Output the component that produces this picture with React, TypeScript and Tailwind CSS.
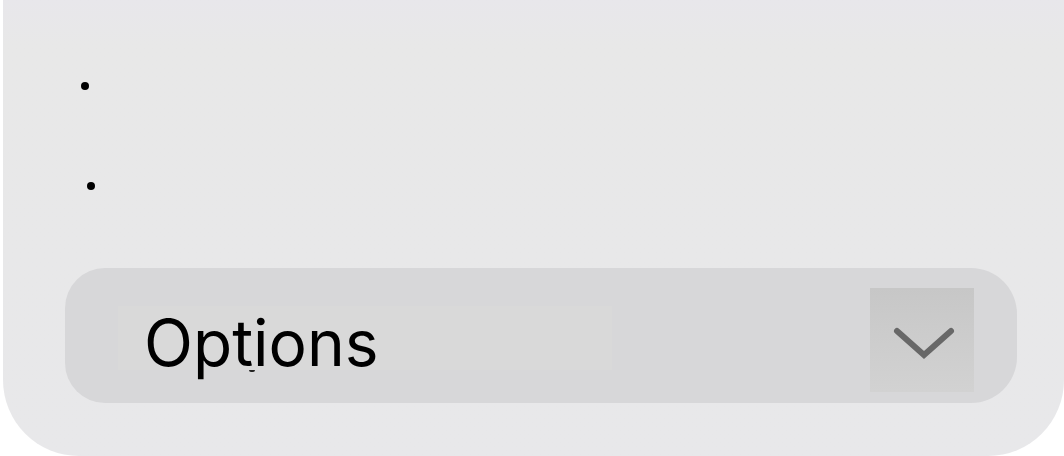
const bullets = [
  { id: "first", indent: "ml-0" },
  { id: "second", indent: "ml-1.5" },
];

function Chevron() {
  return (
    <svg viewBox="0 0 104 104" className="size-full" fill="none" aria-hidden="true">
      <path
        d="M27 43 L54 67 L81 43"
        stroke="#686868"
        strokeWidth="6"
        strokeLinecap="round"
        strokeLinejoin="miter"
      />
    </svg>
  );
}

export default function App() {
  return (
    <main className="bg-white pl-[3px] font-['Inter','Liberation_Sans',sans-serif] text-black">
      <section className="rounded-b-[76px] bg-linear-to-b from-[#e8e7eb] via-[#e8e8e8] via-10% to-[#e8e8ea] pt-[82px] pr-[47px] pb-[53px] pl-[62px]">
        <ul className="flex flex-col gap-[92px] pl-4">
          {bullets.map((bullet) => (
            <li key={bullet.id} className={bullet.indent}>
              <span className="block size-2 rounded-full bg-black" />
            </li>
          ))}
        </ul>
        <button
          type="button"
          aria-expanded="false"
          className="mt-[78px] flex w-full items-start justify-between rounded-l-[40px] rounded-r-[46px] bg-[#d7d7d9] pt-5 pr-[43px] pb-[11px] pl-[53px] text-left"
        >
          <span className="relative mt-[18px] h-16 w-[494px] bg-[#d9d9d9] pl-[26px] text-[64px] leading-[74px]">
            Options
            <span className="absolute top-full left-[131px] h-0.5 w-1.5 rounded-b-full bg-[#222222]" />
          </span>
          <span className="size-[104px] bg-linear-to-b from-[#c7c7c7] to-[#d2d2d2]">
            <Chevron />
          </span>
        </button>
      </section>
    </main>
  );
}
